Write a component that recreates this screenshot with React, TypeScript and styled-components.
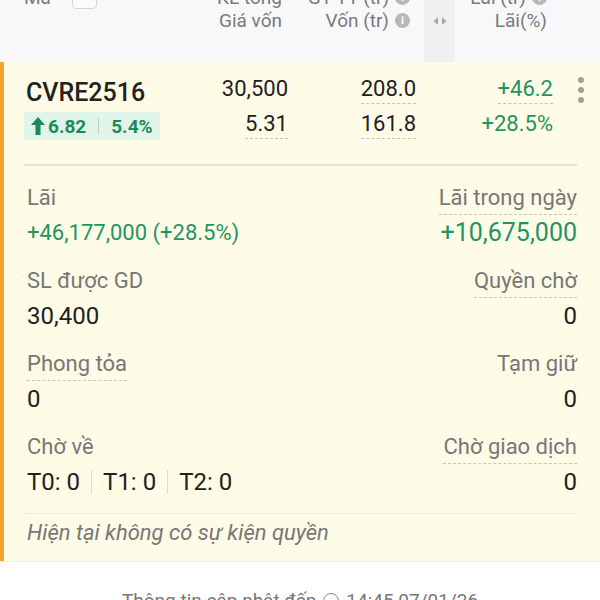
import React from 'react'
import styled, { createGlobalStyle } from 'styled-components'

const GlobalStyle = createGlobalStyle`
  html, body {
    margin: 0;
    padding: 0;
    background: #ffffff;
    font-family: Roboto, "Noto Sans", "Liberation Sans", sans-serif;
    overflow: hidden;
  }
`

const Page = styled.div`
  width: 600px;
  height: 600px;
  overflow: hidden;
  display: flex;
  flex-direction: column;
`

const Header = styled.div`
  display: grid;
  grid-template-columns: 24px 140px 124px 128px 8px 31px 98px 47px;
  margin-top: -15px;
  height: 77px;
  padding-top: 1px;
  box-sizing: border-box;
  background: #f8f8fa;
  color: #7a7a7a;
  font-size: 19px;
  line-height: 23px;
  flex-shrink: 0;
`

const HeadCell = styled.div<{ $col: number; $align?: 'left' | 'right' }>`
  grid-column: ${(p) => p.$col};
  display: flex;
  flex-direction: column;
  align-items: ${(p) => (p.$align === 'left' ? 'flex-start' : 'flex-end')};
  padding-right: ${(p) => (p.$align === 'left' ? 0 : 6)}px;
`

const HeadLine = styled.span`
  display: inline-flex;
  align-items: center;
  gap: 6px;
  white-space: nowrap;
`

const SortBox = styled.span`
  display: inline-block;
  width: 25px;
  height: 22px;
  margin-left: 15px;
  border: 1px solid #d6d6da;
  border-radius: 4px;
  background: #fbfbfc;
  box-sizing: border-box;
`

const ScrollBand = styled.div`
  grid-column: 6;
  background: #f0f0f3;
  display: flex;
  justify-content: center;
  padding-top: 30px;
`

const InfoDot = styled.span`
  display: inline-flex;
  width: 15px;
  height: 15px;
  border-radius: 50%;
  background: #b8b8b8;
  color: #fff;
  font-size: 11px;
  font-weight: 700;
  align-items: center;
  justify-content: center;
  line-height: 1;
`

const Card = styled.div`
  background: #fefbe6;
  border-left: 4px solid #f5a62a;
  display: flex;
  flex-direction: column;
  flex-shrink: 0;
`

const PositionRow = styled.div`
  display: grid;
  grid-template-columns: 20px 140px 124px 128px 137px 47px;
  padding-top: 11px;
  padding-bottom: 24px;
`

const NameCell = styled.div`
  grid-column: 2;
  display: flex;
  flex-direction: column;
  align-items: flex-start;
  padding-top: 3px;
`

const Symbol = styled.div`
  font-size: 25px;
  font-weight: 500;
  color: #212121;
  line-height: 34px;
  padding-left: 2px;
`

const Badge = styled.div`
  margin-top: 2px;
  display: inline-flex;
  align-items: center;
  height: 28px;
  padding: 0 7px 0 7px;
  background: #e1f4e9;
  color: #1b8a5a;
  font-size: 19px;
  font-weight: 700;
  gap: 3px;
`

const BadgeSep = styled.span`
  width: 1px;
  height: 16px;
  background: #b9cfc2;
  margin: 0 9px;
`

const NumCell = styled.div<{ $col: number }>`
  grid-column: ${(p) => p.$col};
  display: flex;
  flex-direction: column;
  align-items: flex-end;
  gap: 4px;
`

const Num = styled.span<{ $green?: boolean; $dashed?: boolean }>`
  font-size: 22px;
  line-height: 31px;
  height: 31px;
  box-sizing: border-box;
  color: ${(p) => (p.$green ? '#1f9463' : '#212121')};
  border-bottom: 1px dashed ${(p) => (p.$dashed ? '#c4c4bc' : 'transparent')};
`

const MenuCell = styled.div`
  grid-column: 6;
  display: flex;
  flex-direction: column;
  align-items: center;
  padding-top: 4px;
  padding-left: 8px;
  gap: 4px;
`

const Dot = styled.span`
  width: 6px;
  height: 6px;
  border-radius: 50%;
  background: #a0a0a0;
`

const Divider = styled.div<{ $thick?: boolean }>`
  margin: 0 23px 0 20px;
  height: ${(p) => (p.$thick ? 2 : 1)}px;
  background: ${(p) => (p.$thick ? '#e3e1d6' : '#eceadf')};
`

const Details = styled.div`
  display: grid;
  grid-template-columns: 1fr 1fr;
  row-gap: 15px;
  padding: 17px 23px 13px 23px;
`

const Field = styled.div<{ $right?: boolean }>`
  display: flex;
  flex-direction: column;
  align-items: ${(p) => (p.$right ? 'flex-end' : 'flex-start')};
`

const Label = styled.span<{ $dashed?: boolean }>`
  font-size: 22px;
  line-height: 30px;
  height: 32px;
  color: #777777;
  box-sizing: border-box;
  border-bottom: 1px dashed ${(p) => (p.$dashed ? '#c8c6bc' : 'transparent')};
  white-space: nowrap;
`

const Value = styled.span<{ $green?: boolean; $big?: boolean }>`
  font-size: ${(p) => (p.$big ? 25 : p.$green ? 22 : 24)}px;
  line-height: 36px;
  height: 36px;
  color: ${(p) => (p.$green ? '#1f9463' : '#212121')};
  display: inline-flex;
  align-items: center;
  white-space: nowrap;
`

const TSep = styled.span`
  width: 1px;
  height: 24px;
  background: #e0ddd0;
  margin: 0 11px;
`

const Note = styled.div`
  padding: 6px 23px 15px;
  font-size: 22px;
  line-height: 26px;
  font-style: italic;
  color: #777777;
`

const Footer = styled.div`
  flex: 1;
  background: #ffffff;
  border-top: 1px solid #f0f0ee;
  display: flex;
  justify-content: center;
  align-items: flex-start;
  padding-top: 27px;
  color: #777;
  font-size: 19px;
  line-height: 24px;
  gap: 7px;
`

const Clock = styled.span`
  display: inline-flex;
  width: 16px;
  height: 16px;
  box-sizing: border-box;
  border: 1.5px solid #888;
  border-radius: 50%;
  margin-top: 4px;
`

const UpArrow = () => (
  <svg width="14" height="18" viewBox="0 0 14 18">
    <polygon points="7,0 14,8 9.5,8 9.5,18 4.5,18 4.5,8 0,8" fill="#1b8a5a" />
  </svg>
)

const ScrollArrows = () => (
  <svg width="14" height="10" viewBox="0 0 14 10">
    <polygon points="5,1 5,9 0.5,5" fill="#a8a8a8" />
    <polygon points="9,1 9,9 13.5,5" fill="#a8a8a8" />
  </svg>
)

export default function App() {
  return (
    <Page>
      <GlobalStyle />
      <Header>
        <HeadCell $col={2} $align="left">
          <HeadLine>
            Mã
            <SortBox />
          </HeadLine>
        </HeadCell>
        <HeadCell $col={3}>
          <HeadLine>KL tổng</HeadLine>
          <HeadLine>Giá vốn</HeadLine>
        </HeadCell>
        <HeadCell $col={4}>
          <HeadLine>
            GT TT (tr)
            <InfoDot>i</InfoDot>
          </HeadLine>
          <HeadLine>
            Vốn (tr)
            <InfoDot>i</InfoDot>
          </HeadLine>
        </HeadCell>
        <ScrollBand>
          <ScrollArrows />
        </ScrollBand>
        <HeadCell $col={7}>
          <HeadLine>
            Lãi (tr)
            <InfoDot>i</InfoDot>
          </HeadLine>
          <HeadLine>Lãi(%)</HeadLine>
        </HeadCell>
      </Header>

      <Card>
        <PositionRow>
          <NameCell>
            <Symbol>CVRE2516</Symbol>
            <Badge>
              <UpArrow />
              6.82
              <BadgeSep />
              5.4%
            </Badge>
          </NameCell>
          <NumCell $col={3}>
            <Num>30,500</Num>
            <Num $dashed>5.31</Num>
          </NumCell>
          <NumCell $col={4}>
            <Num $dashed>208.0</Num>
            <Num $dashed>161.8</Num>
          </NumCell>
          <NumCell $col={5}>
            <Num $green $dashed>
              +46.2
            </Num>
            <Num $green>+28.5%</Num>
          </NumCell>
          <MenuCell>
            <Dot />
            <Dot />
            <Dot />
          </MenuCell>
        </PositionRow>

        <Divider $thick />

        <Details>
          <Field>
            <Label>Lãi</Label>
            <Value $green>+46,177,000 (+28.5%)</Value>
          </Field>
          <Field $right>
            <Label $dashed>Lãi trong ngày</Label>
            <Value $green $big>
              +10,675,000
            </Value>
          </Field>

          <Field>
            <Label>SL được GD</Label>
            <Value>30,400</Value>
          </Field>
          <Field $right>
            <Label $dashed>Quyền chờ</Label>
            <Value>0</Value>
          </Field>

          <Field>
            <Label $dashed>Phong tỏa</Label>
            <Value>0</Value>
          </Field>
          <Field $right>
            <Label>Tạm giữ</Label>
            <Value>0</Value>
          </Field>

          <Field>
            <Label>Chờ về</Label>
            <Value>
              T0: 0<TSep />T1: 0<TSep />T2: 0
            </Value>
          </Field>
          <Field $right>
            <Label $dashed>Chờ giao dịch</Label>
            <Value>0</Value>
          </Field>
        </Details>

        <Divider />
        <Note>Hiện tại không có sự kiện quyền</Note>
      </Card>

      <Footer>
        Thông tin cập nhật đến
        <Clock />
        14:45 07/01/26
      </Footer>
    </Page>
  )
}
